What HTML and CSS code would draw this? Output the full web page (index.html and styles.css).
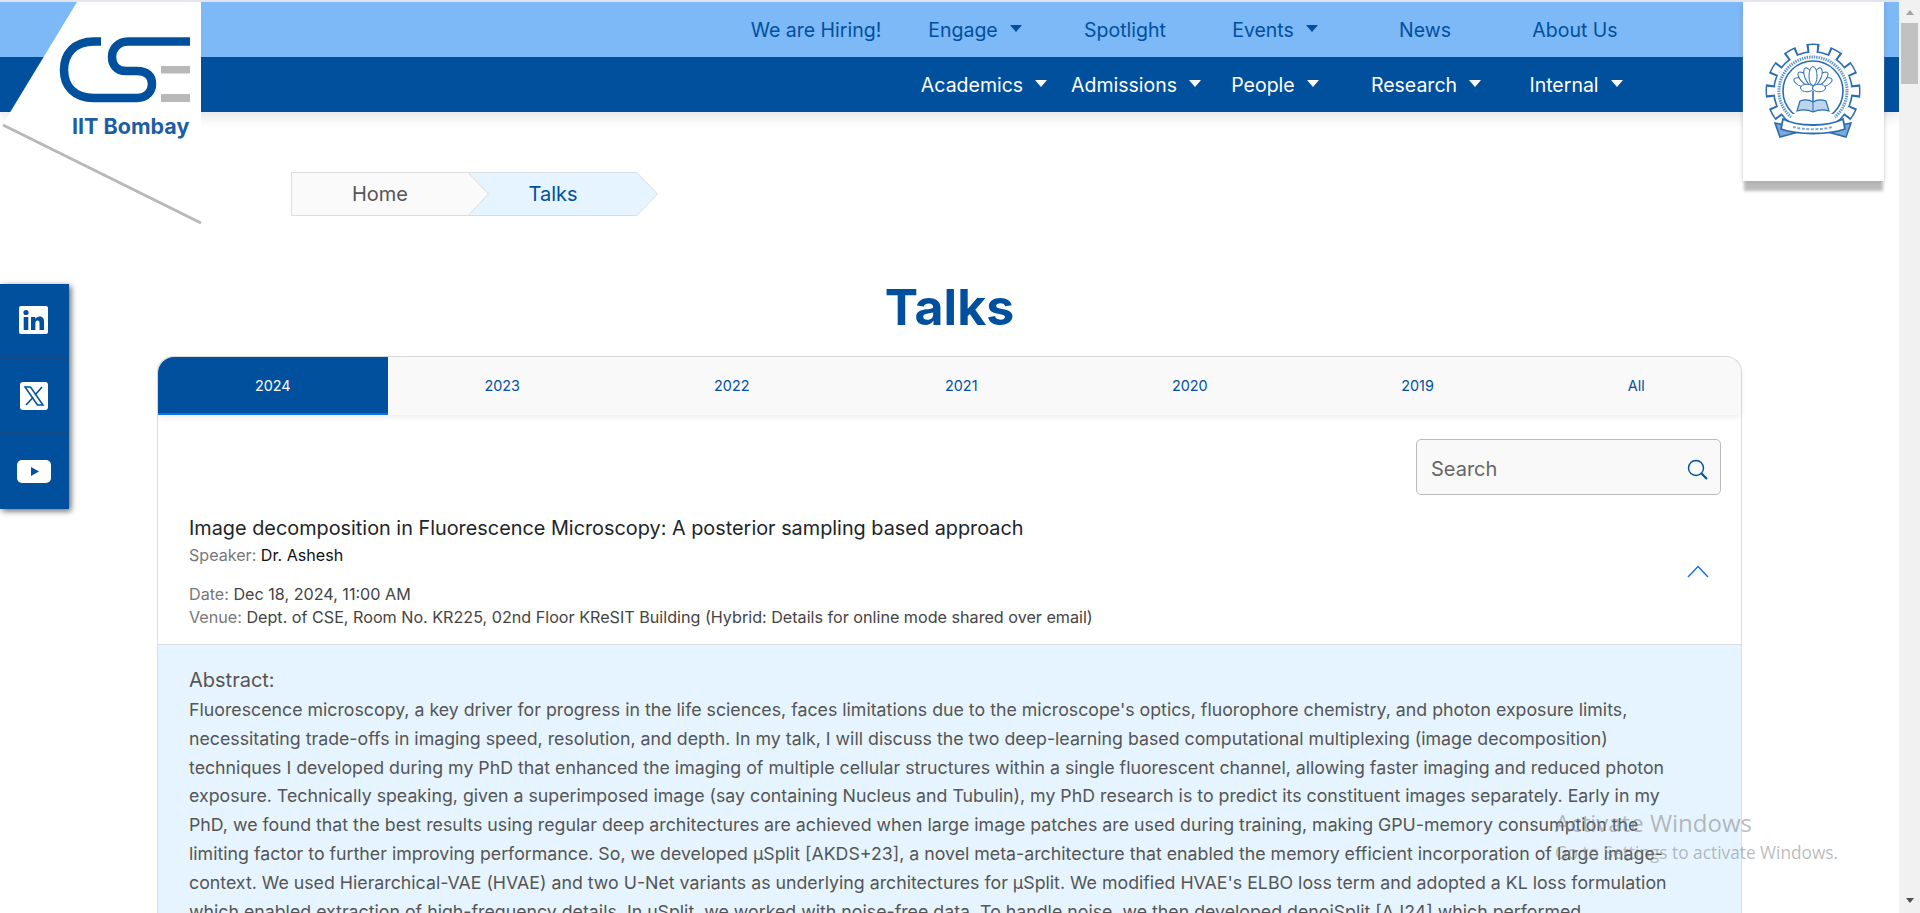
FILE: index.html
```html
<!DOCTYPE html>
<html lang="en">
<head>
    <meta charset="UTF-8">
    <meta name="viewport" content="width=device-width, initial-scale=1.0">
    <title>Talks</title>
    <link rel="stylesheet" href="styles.css">
</head>
<body>
    <div class="page">
        <header class="topnav">
            <nav class="navrow navrow-light">
                <a>We are Hiring!</a>
                <a class="has-caret">Engage</a>
                <a>Spotlight</a>
                <a class="has-caret">Events</a>
                <a>News</a>
                <a>About Us</a>
            </nav>
            <nav class="navrow navrow-dark">
                <a class="has-caret">Academics</a>
                <a class="has-caret">Admissions</a>
                <a class="has-caret">People</a>
                <a class="has-caret">Research</a>
                <a class="has-caret">Internal</a>
            </nav>
        </header>

        <!-- department logo -->
        <div class="cse-logo">
            <svg class="cse-shape" width="205" height="225" viewBox="0 0 205 225">
                <polygon points="77,2 201,2 201,221 3,124" fill="#fff"/>
                <line x1="3" y1="125" x2="201" y2="223" stroke="#b8b8b8" stroke-width="3"/>
                <path d="M101 41.5 H94 C74 41.5 64 54 64 70 C64 86 74 98 94 98 H137 C147 98 152 91 152 84 C152 76 147 71 137 71 H126 C116 71 112 64 112 57 C112 49 118 41.5 128 41.5 H190" fill="none" stroke="#00509e" stroke-width="8.5"/>
                <rect x="161" y="66" width="29" height="7.5" fill="#b8b8b8"/>
                <rect x="161" y="94" width="29" height="8" fill="#b8b8b8"/>
            </svg>
            <span class="cse-name">IIT Bombay</span>
        </div>

        <!-- institute emblem -->
        <div class="emblem">
            <svg width="100" height="98" viewBox="0 0 100 98" fill="none">
                <!-- gear: blue teeth, white inset on top -->
                <circle cx="50" cy="50" r="43" stroke="#2a6cb3" stroke-width="9" pathLength="120" stroke-dasharray="5.4 4.6" stroke-dashoffset="2.7"/>
                <circle cx="50" cy="50" r="40" fill="#2a6cb3"/>
                <circle cx="50" cy="50" r="42" fill="none" stroke="#fff" stroke-width="8" pathLength="120" stroke-dasharray="3.6 6.4" stroke-dashoffset="1.8"/>
                <circle cx="50" cy="50" r="38.4" fill="#fff"/>
                <circle cx="50" cy="50" r="34" stroke="#5d93cb" stroke-width="3" stroke-dasharray="1.4 1"/>
                <circle cx="50" cy="50" r="30" stroke="#2a6cb3" stroke-width="1.6"/>
                <!-- lotus -->
                <g fill="#fff" stroke="#2a6cb3" stroke-width="1">
                    <ellipse cx="50" cy="35" rx="4" ry="9.5" transform="rotate(-68 50 46)"/>
                    <ellipse cx="50" cy="35" rx="4" ry="9.5" transform="rotate(68 50 46)"/>
                    <ellipse cx="50" cy="35" rx="4" ry="9.5" transform="rotate(-45 50 46)"/>
                    <ellipse cx="50" cy="35" rx="4" ry="9.5" transform="rotate(45 50 46)"/>
                    <ellipse cx="50" cy="35" rx="4" ry="9.5" transform="rotate(-22 50 46)"/>
                    <ellipse cx="50" cy="35" rx="4" ry="9.5" transform="rotate(22 50 46)"/>
                    <ellipse cx="50" cy="35" rx="4" ry="9.5"/>
                    <ellipse cx="44" cy="47" rx="6.5" ry="3.8"/>
                    <ellipse cx="56" cy="47" rx="6.5" ry="3.8"/>
                </g>
                <path d="M50 50 V60" stroke="#2a6cb3" stroke-width="1.6"/>
                <!-- book -->
                <path d="M34 70 L37 60 C42 58 47 59 50 61 C53 59 58 58 63 60 L66 70 C60 68 54 69 50 71 C46 69 40 68 34 70 Z" fill="#bcd4ec" stroke="#2a6cb3" stroke-width="1.2"/>
                <path d="M50 61 V71" stroke="#2a6cb3" stroke-width="1"/>
                <!-- ribbon, hides the foot of the gear -->
                <path d="M30 73 H70 L84 98 H16 Z" fill="#fff"/>
                <path d="M22 84 L12 82 L17 96 L32 92 Z M78 84 L88 82 L83 96 L68 92 Z" fill="#7ea9d6" stroke="#2a6cb3" stroke-width="1.6"/>
                <path d="M20 78 C35 86 65 86 80 78 L82 88 C65 94 35 94 18 88 Z" fill="#fff" stroke="#2a6cb3" stroke-width="1.8"/>
                <path d="M30 86 C42 89 58 89 70 86" stroke="#7ea9d6" stroke-width="2" stroke-dasharray="3 1.5"/>
            </svg>
        </div>

        <!-- social links -->
        <aside class="social">
            <a>
                <svg width="29" height="29" viewBox="0 0 29 29">
                    <rect width="29" height="28" rx="2" fill="#fff"/>
                    <circle cx="7" cy="6.5" r="2.6" fill="#00509e"/>
                    <rect x="4.7" y="11" width="4.6" height="13" fill="#00509e"/>
                    <path d="M12 11 H16.3 V13 C17.2 11.5 18.8 10.6 20.6 10.6 C24.2 10.6 25 13 25 16 V24 H20.5 V17 C20.5 15.5 20 14.4 18.6 14.4 C17 14.4 16.4 15.6 16.4 17 V24 H12 Z" fill="#00509e"/>
                </svg>
            </a>
            <a>
                <svg width="28" height="28" viewBox="0 0 28 28">
                    <rect width="28" height="28" rx="3" fill="#fff"/>
                    <path d="M5 5 H10.5 L23 23 H17.5 Z" fill="none" stroke="#00509e" stroke-width="1.5"/>
                    <path d="M22 5 L15 13 M13 15.5 L6 23" stroke="#00509e" stroke-width="1.6"/>
                </svg>
            </a>
            <a>
                <svg width="34" height="23" viewBox="0 0 34 23">
                    <rect width="34" height="23" rx="5" fill="#fff"/>
                    <polygon points="14,7 14,16 22,11.5" fill="#00509e"/>
                </svg>
            </a>
        </aside>

        <div class="breadcrumb">
            <a class="crumb crumb-home">Home</a>
            <a class="crumb crumb-current">Talks</a>
        </div>

        <h1 class="page-title">Talks</h1>

        <main class="talks-card">
            <div class="tabs">
                <a class="tab active">2024</a>
                <a class="tab">2023</a>
                <a class="tab">2022</a>
                <a class="tab">2021</a>
                <a class="tab">2020</a>
                <a class="tab">2019</a>
                <a class="tab">All</a>
            </div>

            <div class="search-row">
                <div class="search-box">
                    <span class="search-text">Search</span>
                    <svg width="21" height="21" viewBox="0 0 21 21" fill="none">
                        <circle cx="9" cy="9" r="7.5" stroke="#00509e" stroke-width="1.4"/>
                        <path d="M14.5 14.5 L20 20" stroke="#00509e" stroke-width="2.2"/>
                    </svg>
                </div>
            </div>

            <section class="talk-head">
                <div class="talk-info">
                    <h2 class="talk-title">Image decomposition in Fluorescence Microscopy: A posterior sampling based approach</h2>
                    <p class="speaker"><span class="muted">Speaker:</span> Dr. Ashesh</p>
                    <p class="meta"><span class="muted">Date:</span> Dec 18, 2024, 11:00 AM</p>
                    <p class="meta"><span class="muted">Venue:</span> Dept. of CSE, Room No. KR225, 02nd Floor KReSIT Building (Hybrid: Details for online mode shared over email)</p>
                </div>
                <svg class="chevron" width="22" height="13" viewBox="0 0 22 13" fill="none">
                    <path d="M1 12 L11 1.5 L21 12" stroke="#0d6efd" stroke-width="1.4"/>
                </svg>
            </section>

            <section class="abstract">
                <h3>Abstract:</h3>
                <p>Fluorescence microscopy, a key driver for progress in the life sciences, faces limitations due to the microscope's optics, fluorophore chemistry, and photon exposure limits,<br>
                necessitating trade-offs in imaging speed, resolution, and depth. In my talk, I will discuss the two deep-learning based computational multiplexing (image decomposition)<br>
                techniques I developed during my PhD that enhanced the imaging of multiple cellular structures within a single fluorescent channel, allowing faster imaging and reduced photon<br>
                exposure. Technically speaking, given a superimposed image (say containing Nucleus and Tubulin), my PhD research is to predict its constituent images separately. Early in my<br>
                PhD, we found that the best results using regular deep architectures are achieved when large image patches are used during training, making GPU-memory consumption the<br>
                limiting factor to further improving performance. So, we developed μSplit [AKDS+23], a novel meta-architecture that enabled the memory efficient incorporation of large image-<br>
                context. We used Hierarchical-VAE (HVAE) and two U-Net variants as underlying architectures for μSplit. We modified HVAE's ELBO loss term and adopted a KL loss formulation<br>
                which enabled extraction of high-frequency details. In μSplit, we worked with noise-free data. To handle noise, we then developed denoiSplit [AJ24] which performed</p>
            </section>
        </main>

        <div class="watermark">
            <div class="wm-big">Activate Windows</div>
            <div class="wm-small">Go to Settings to activate Windows.</div>
        </div>
    </div>

    <div class="scrollbar">
        <span class="sb-up"></span>
        <span class="sb-thumb"></span>
        <span class="sb-down"></span>
    </div>
</body>
</html>
```

FILE: styles.css
```css
* {
    box-sizing: border-box;
}

html, body {
    height: 913px;
    overflow: hidden;
}

body {
    margin: 0;
    background: #fff;
    font-family: 'Inter', sans-serif;
    color: #555;
    display: flex;
}

.page {
    position: relative;
    width: 1899px;
    height: 913px;
    overflow: hidden;
    border-top: 2px solid #e4e4f0;
}

/* top navigation */
.topnav {
    box-shadow: 0 4px 14px rgba(0, 0, 0, 0.12);
}

.navrow {
    display: grid;
    height: 55px;
    padding-top: 1px;
    align-items: center;
    font-size: 19.5px;
}

.navrow a {
    display: flex;
    justify-content: center;
    align-items: center;
    white-space: nowrap;
}

.navrow-light {
    background: #7db8f7;
    color: #00509e;
    grid-template-columns: 168px repeat(5, 150px);
    padding-left: 732px;
}

.navrow-dark {
    background: #00509e;
    color: #fff;
    grid-template-columns: 150px 154px 124px 178px 122px;
    padding-left: 909px;
}

.has-caret::after {
    content: "";
    margin-left: 12px;
    margin-top: -3px;
    border-left: 6px solid transparent;
    border-right: 6px solid transparent;
    border-top: 7px solid currentColor;
}

/* logos */
.cse-logo {
    position: absolute;
    left: 0;
    top: -2px;
    width: 205px;
    height: 225px;
}

.cse-shape {
    display: block;
}

.cse-name {
    position: absolute;
    left: 72px;
    top: 113px;
    font-size: 21.5px;
    font-weight: 700;
    color: #1c5ea5;
    white-space: nowrap;
}

.emblem {
    position: absolute;
    left: 1743px;
    top: 0;
    width: 141px;
    height: 179px;
    background: #fff;
    box-shadow: 0 0 5px rgba(0, 0, 0, 0.15), 0 11px 3px -1px #bbb;
    padding: 39px 0 0 20px;
}

/* social */
.social {
    position: absolute;
    left: 0;
    top: 282px;
    width: 69px;
    background: #00509e;
    box-shadow: 2px 2px 6px rgba(0, 0, 0, 0.6);
}

.social a {
    display: flex;
    height: 75px;
    justify-content: center;
    align-items: center;
    padding-right: 2px;
    border-bottom: 2px solid #174a80;
}

.social a:last-child {
    border-bottom: none;
}

/* breadcrumb */
.breadcrumb {
    position: absolute;
    left: 291px;
    top: 170px;
    display: flex;
    font-size: 20px;
}

.crumb {
    height: 44px;
    display: flex;
    align-items: center;
    justify-content: center;
    border: 1px solid #ddd;
    position: relative;
    border-right: none;
}

.crumb-home {
    width: 177px;
    background: #fafafa;
    color: #555;
}

.crumb-current {
    width: 169px;
    background: #e6f4ff;
    color: #00509e;
}

.crumb::before,
.crumb::after {
    content: "";
    position: absolute;
    left: 100%;
    top: -1px;
    border-style: solid;
    border-width: 22px 0 22px 21px;
    border-color: transparent transparent transparent #ddd;
}

.crumb::after {
    margin-left: -1px;
}

.crumb-home::after {
    border-left-color: #fafafa;
    z-index: 2;
}

.crumb-home::before {
    z-index: 1;
}

.crumb-current::after {
    border-left-color: #e6f4ff;
}

/* title */
.page-title {
    margin: 0;
    position: absolute;
    left: 157px;
    width: 1585px;
    top: 275px;
    text-align: center;
    font-size: 50px;
    font-weight: 700;
    line-height: 60px;
    color: #00509e;
}

/* card */
.talks-card {
    position: absolute;
    left: 157px;
    top: 354px;
    width: 1585px;
    border: 1px solid #ddd;
    border-bottom: none;
    border-radius: 16px 16px 0 0;
}

.tabs {
    display: grid;
    grid-template-columns: repeat(4, 229.5px) 227.5px 228px 1fr;
    height: 58px;
    background: #f9f9f9;
    border-radius: 16px 16px 0 0;
    box-shadow: 0 2px 6px rgba(0, 0, 0, 0.08);
    font-size: 14.4px;
    color: #00509e;
}

.tab {
    display: flex;
    align-items: center;
    justify-content: center;
    padding-bottom: 2px;
}

.tab.active {
    background: #00509e;
    color: #fff;
    padding-bottom: 0;
    border-bottom: 2px solid #0d6efd;
    border-top-left-radius: 16px;
}

.search-row {
    display: flex;
    justify-content: flex-end;
    padding: 24px 20px 0 0;
}

.search-box {
    width: 305px;
    height: 56px;
    padding: 4px 12px 0 14px;
    display: flex;
    align-items: center;
    justify-content: space-between;
    background: #f9f9f9;
    border: 1px solid #bbb;
    border-radius: 5px;
    font-size: 20px;
    color: #666;
}

.talk-head {
    display: flex;
    align-items: center;
    justify-content: space-between;
    padding: 20px 32px 15px 31px;
    border-bottom: 1px solid #ddd;
}

.talk-title {
    margin: 0 0 2px;
    font-size: 19.85px;
    font-weight: 400;
    line-height: 26px;
    color: #212529;
}

.speaker {
    margin: 0 0 16px;
    font-size: 16.1px;
    line-height: 24px;
    color: #111;
}

.meta {
    margin: 0;
    font-size: 16.15px;
    line-height: 23px;
    color: #444;
}

.muted {
    color: #777;
}

.chevron {
    margin-bottom: 1px;
}

.abstract {
    background: #e6f4ff;
    padding: 20px 17px 40px 31px;
}

.abstract h3 {
    margin: 0 0 1px;
    font-size: 20px;
    font-weight: 400;
    line-height: 30px;
    color: #555;
}

.abstract p {
    margin: 0;
    font-size: 17.75px;
    line-height: 28.8px;
    color: #555;
    white-space: nowrap;
}

/* activation notice */
.watermark {
    position: absolute;
    left: 1555px;
    top: 805px;
    font-family: 'Open Sans', sans-serif;
    color: rgba(130, 130, 130, 0.55);
    white-space: nowrap;
}

.wm-big {
    font-size: 24px;
    line-height: 32px;
}

.wm-small {
    font-size: 17.3px;
    line-height: 24px;
    margin-top: 2px;
}

/* page scrollbar */
.scrollbar {
    flex: 1;
    height: 913px;
    background: #f1f1f1;
    display: flex;
    flex-direction: column;
    align-items: center;
    padding-top: 10px;
}

.sb-up {
    width: 0;
    height: 0;
    border-left: 4.5px solid transparent;
    border-right: 4.5px solid transparent;
    border-bottom: 5px solid #a3a3a3;
}

.sb-thumb {
    width: 17px;
    height: 61px;
    margin-top: 8px;
    background: #c1c1c1;
}

.sb-down {
    width: 0;
    height: 0;
    margin-top: auto;
    margin-bottom: 10px;
    border-left: 4.5px solid transparent;
    border-right: 4.5px solid transparent;
    border-top: 5px solid #505050;
}
```
